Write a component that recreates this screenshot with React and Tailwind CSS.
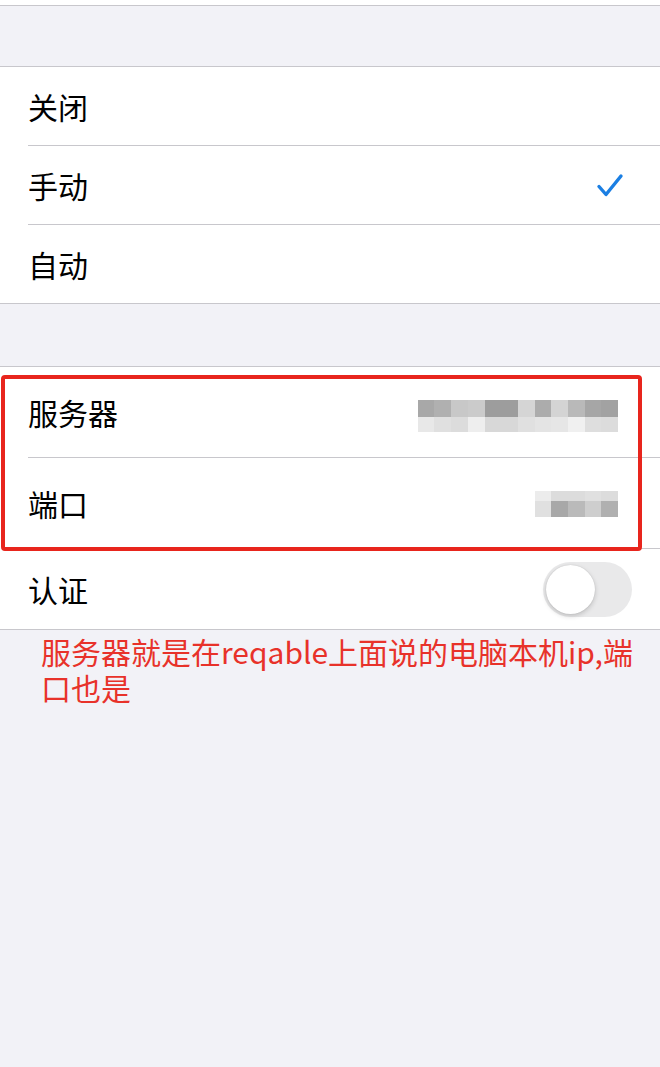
const serverCells = [
  ['#a8a8a8', '#b0b0b0', '#c8c8c8', '#cbcbcb', '#9d9d9d', '#9d9d9d', '#d5d5d5', '#acacac', '#d4d4d4', '#b9b9b9', '#a6a6a6', '#a2a2a2'],
  ['#e8e8e8', '#e0e0e0', '#dcdcdc', '#eeeeee', '#d8d8d8', '#d8d8d8', '#e0e0e0', '#e4e4e4', '#e6e6e6', '#f0f0f0', '#dedede', '#dcdcdc'],
];

const portCells = [
  ['#ececec', '#dcdcdc', '#dcdcdc', '#e0e0e0', '#dcdcdc'],
  ['#e0e0e0', '#a8a8a8', '#bababa', '#cecece', '#b0b0b0'],
];

const Mosaic = ({ rows, heights }) => (
  <div className="flex flex-col blur-[0.6px]">
    {rows.map((row, i) => (
      <div key={i} className="flex">
        {row.map((c, j) => (
          <div key={j} className="w-[16.7px]" style={{ backgroundColor: c, height: heights[i] }} />
        ))}
      </div>
    ))}
  </div>
);

const Separator = () => <div className="ml-[28px] h-px bg-[#c8c7cc]" />;

const Row = ({ label, h = 'h-[78px]', children }) => (
  <div className={`${h} flex items-center justify-between pl-[28px]`}>
    <span className="text-[30px] leading-none text-black">{label}</span>
    {children}
  </div>
);

export default function App() {
  return (
    <div className="relative min-h-[1067px] bg-[#f2f2f7] font-['Noto_Sans_CJK_SC','Noto_Sans',sans-serif]">
      <div className="h-[6px] bg-white border-b border-[#c8c7cc]" />
      <div className="h-[60px]" />

      <div className="bg-white border-y border-[#c8c7cc]">
        <Row label="关闭" />
        <Separator />
        <Row label="手动">
          <svg width="28" height="25" viewBox="0 0 28 25" className="mr-[36px]" fill="none">
            <path d="M3 13.5 L10 21.5 L25 3" stroke="#1b7fe3" strokeWidth="3.4" strokeLinecap="round" strokeLinejoin="round" />
          </svg>
        </Row>
        <Separator />
        <Row label="自动" />
      </div>

      <div className="h-[62px]" />

      <div className="bg-white border-y border-[#c8c7cc]">
        <Row label="服务器" h="h-[90px]">
          <div className="mr-[42px] mt-[8px]">
            <Mosaic rows={serverCells} heights={[17, 15]} />
          </div>
        </Row>
        <Separator />
        <Row label="端口" h="h-[90px]">
          <div className="mr-[42px] mt-[1px]">
            <Mosaic rows={portCells} heights={[10, 16]} />
          </div>
        </Row>
        <Separator />
        <Row label="认证" h="h-[80px]">
          <div className="mr-[28px] w-[89px] h-[55px] rounded-full bg-[#e9e9ea] p-[3px] flex items-center">
            <div className="w-[49px] h-[49px] rounded-full bg-white shadow-[0_2px_5px_rgba(0,0,0,0.18),0_0_1px_rgba(0,0,0,0.2)]" />
          </div>
        </Row>
      </div>

      <p className="pl-[41px] pt-[3px] text-[30px] leading-[36px] text-[#e8322a]">
        服务器就是在reqable上面说的电脑本机ip,端
        <br />
        口也是
      </p>

      <div className="absolute left-[1px] top-[375px] w-[641px] h-[176px] border-[4px] border-[#e8251d] rounded-[4px]" />
    </div>
  );
}
